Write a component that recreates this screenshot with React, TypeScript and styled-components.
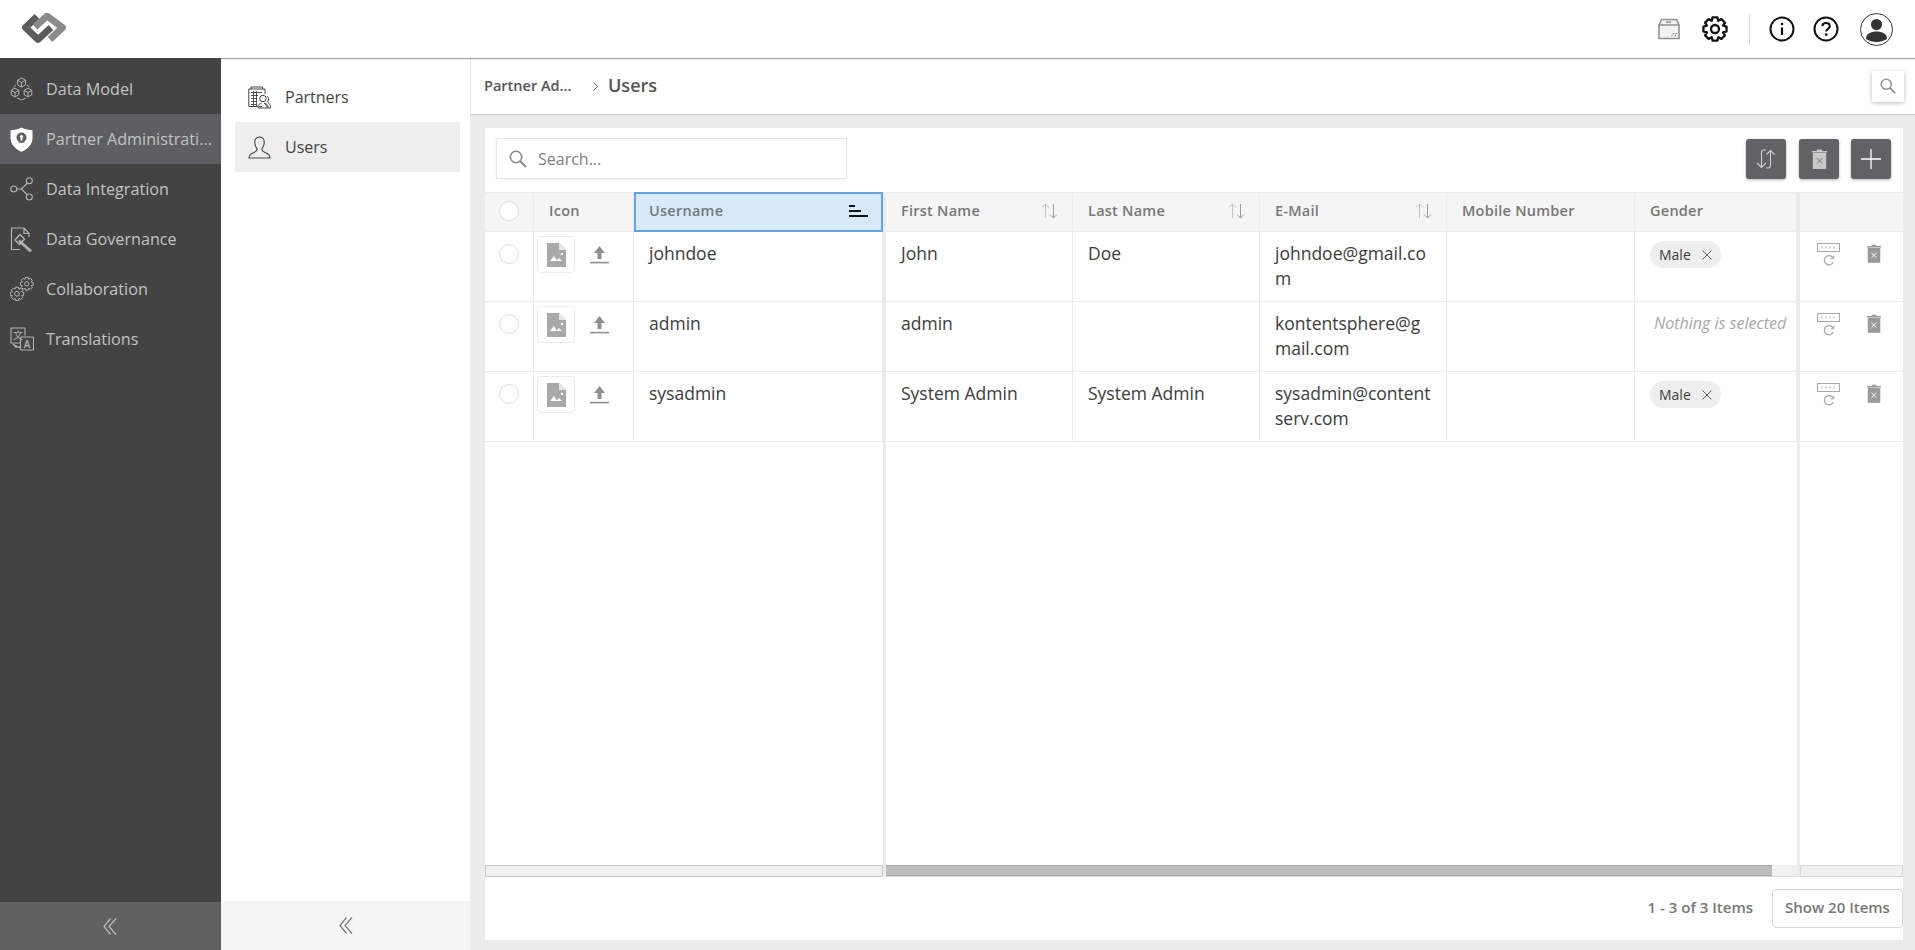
import React from 'react';
import styled, { createGlobalStyle } from 'styled-components';

const COLS = '49px 100px 249px 3px 187px 187px 187px 188px 162px 3px 103px';
const FONT = '"Open Sans", "Noto Sans", sans-serif';

const Global = createGlobalStyle`
  html, body { margin: 0; padding: 0; height: 100%; overflow: hidden; }
  body { font-family: ${FONT}; color: #333; background: #fff; }
  #root { height: 100%; }
  * { box-sizing: border-box; }
  svg { display: block; flex: none; }
`;

const Page = styled.div`
  display: flex;
  flex-direction: column;
  height: 950px;
  width: 1915px;
`;
const Header = styled.header`
  position: relative;
  z-index: 1;
  flex: none;
  height: 58px;
  display: flex;
  align-items: center;
  justify-content: space-between;
  padding: 0 22px 0 21px;
  background: #fff;
  box-shadow: 0 1px 1px rgba(0, 0, 0, 0.35);
`;
const HeaderTools = styled.div`
  display: flex;
  align-items: center;
`;
const ToolSlot = styled.div<{ $ml: number }>`
  margin-left: ${(p) => p.$ml}px;
  display: flex;
  align-items: center;
`;
const ToolDivider = styled.div`
  width: 1px;
  height: 30px;
  margin: 0 19px 0 21px;
  background: #d8d8d8;
`;
const Body = styled.div`
  flex: 1;
  min-height: 0;
  display: flex;
`;
const Nav = styled.nav`
  position: relative;
  z-index: 2;
  flex: none;
  width: 221px;
  background: #434343;
  display: flex;
  flex-direction: column;
`;
const NavList = styled.div`
  flex: 1;
  padding-top: 6px;
`;
const NavItem = styled.div<{ $active?: boolean }>`
  height: 50px;
  display: flex;
  align-items: center;
  gap: 13px;
  padding: 0 9px 0 10px;
  background: ${(p) => (p.$active ? '#5e5f63' : 'transparent')};
`;
const NavIconSlot = styled.span`
  flex: none;
  width: 23px;
  display: flex;
  justify-content: center;
`;
const NavLabel = styled.span`
  flex: 1;
  min-width: 0;
  font-size: 16.2px;
  color: #c2c2c2;
  white-space: nowrap;
`;
const Collapse = styled.div<{ $dark?: boolean }>`
  flex: none;
  height: ${(p) => (p.$dark ? 48 : 49)}px;
  display: flex;
  align-items: center;
  justify-content: center;
  padding-right: ${(p) => (p.$dark ? 2 : 0)}px;
  background: ${(p) => (p.$dark ? '#616161' : '#f5f5f5')};
`;
const SubNav = styled.aside`
  flex: none;
  width: 250px;
  background: #fff;
  border-right: 1px solid #ebebeb;
  display: flex;
  flex-direction: column;
`;
const SubList = styled.div`
  flex: 1;
  padding: 14px 10px 0 14px;
`;
const SubItem = styled.div<{ $active?: boolean }>`
  height: 50px;
  display: flex;
  align-items: center;
  gap: 14px;
  padding-left: 13px;
  font-size: 16px;
  color: #444;
  border-radius: 2px;
  background: ${(p) => (p.$active ? '#eeeeee' : 'transparent')};
`;
const Main = styled.main`
  flex: 1;
  min-width: 0;
  display: flex;
  flex-direction: column;
  background: #ececec;
`;
const Crumbs = styled.div`
  flex: none;
  height: 56px;
  display: flex;
  align-items: center;
  padding: 0 11px 0 13px;
  background: #fff;
  box-shadow: 0 1px 1px rgba(0, 0, 0, 0.12);
`;
const CrumbParent = styled.span`
  width: 90px;
  margin-bottom: 2px;
  font-size: 14.5px;
  font-weight: 600;
  color: #555;
  white-space: nowrap;
`;
const CrumbArrow = styled.span`
  margin: 0 10px 0 19px;
`;
const CrumbCurrent = styled.span`
  flex: 1;
  margin-bottom: 2px;
  font-size: 18px;
  font-weight: 600;
  color: #555;
`;
const CrumbSearch = styled.button`
  width: 32px;
  height: 31px;
  padding: 0;
  border: 0;
  border-radius: 2px;
  background: #fff;
  display: flex;
  align-items: center;
  justify-content: center;
  box-shadow: 0 1px 4px rgba(0, 0, 0, 0.28);
`;
const Panel = styled.section`
  flex: 1;
  min-height: 0;
  margin: 14px 12px 10px 14px;
  background: #fff;
  display: flex;
  flex-direction: column;
`;
const Toolbar = styled.div`
  flex: none;
  height: 64px;
  display: flex;
  justify-content: space-between;
  align-items: flex-start;
  padding: 10px 12px 0 11px;
`;
const SearchBox = styled.div`
  width: 351px;
  height: 41px;
  display: flex;
  align-items: center;
  gap: 11px;
  padding-left: 12px;
  border: 1px solid #e6e6e6;
  box-shadow: 0 0 1px rgba(0, 0, 0, 0.1);
  font-size: 16px;
  color: #808080;
`;
const ToolButtons = styled.div`
  display: flex;
  gap: 12px;
  padding-top: 1px;
`;
const ToolButton = styled.button<{ $mr?: number }>`
  width: 40px;
  height: 40px;
  padding: 0;
  margin-right: ${(p) => p.$mr ?? 0}px;
  border: 0;
  border-radius: 3px;
  background: #616266;
  display: flex;
  align-items: center;
  justify-content: center;
  box-shadow: 0 1px 3px rgba(0, 0, 0, 0.3);
`;
const Table = styled.div`
  flex: 1;
  min-height: 0;
  display: flex;
  flex-direction: column;
`;
const HeadRow = styled.div`
  flex: none;
  height: 40px;
  display: grid;
  grid-template-columns: ${COLS};
  background: #f5f5f5;
  border-top: 1px solid #ececec;
  border-bottom: 1px solid #ececec;
`;
const HeadCell = styled.div<{ $sorted?: boolean; $pad?: number }>`
  display: flex;
  align-items: center;
  justify-content: space-between;
  padding: 0 ${(p) => (p.$sorted ? 13 : 14)}px 3px ${(p) => p.$pad ?? 15}px;
  font-size: 14.5px;
  font-weight: 600;
  letter-spacing: 0.25px;
  color: #777;
  border-right: ${(p) => (p.$sorted ? '0' : '1px solid #ececec')};
  ${(p) =>
    p.$sorted
      ? `background: #d6eafc; border: 2px solid #62a4e0; margin-top: -1px; margin-bottom: -1px;`
      : ''}
`;
const CheckCell = styled.div<{ $head?: boolean }>`
  display: flex;
  align-items: ${(p) => (p.$head ? 'center' : 'flex-start')};
  justify-content: center;
  padding: ${(p) => (p.$head ? '0 0 2px' : '12px 0 0')};
  border-right: 1px solid #ececec;
`;
const Radio = styled.span`
  width: 20px;
  height: 20px;
  border-radius: 50%;
  background: #fff;
  border: 1px solid #dcdcdc;
`;
const Gap = styled.div`
  background: #ebebeb;
`;
const Row = styled.div`
  flex: none;
  height: 70px;
  display: grid;
  grid-template-columns: ${COLS};
  border-bottom: 1px solid #ececec;
`;
const FillRow = styled.div`
  flex: 1;
  min-height: 0;
  display: grid;
  grid-template-columns: ${COLS};
`;
const FillFrozen = styled.div`
  grid-column: span 3;
`;
const FillWide = styled.div`
  grid-column: span 5;
`;
const Cell = styled.div`
  padding: 9px 14px 0 15px;
  font-size: 17.5px;
  line-height: 25px;
  color: #3c3c3c;
  overflow-wrap: anywhere;
  word-break: break-all;
  border-right: 1px solid #ececec;
`;
const IconCell = styled.div`
  display: flex;
  align-items: flex-start;
  gap: 15px;
  padding: 4px 0 0 3px;
  border-right: 1px solid #ececec;
`;
const Thumb = styled.div`
  width: 38px;
  height: 37px;
  display: flex;
  align-items: center;
  justify-content: center;
  border: 1px solid #ececec;
  border-radius: 4px;
`;
const UploadSlot = styled.div`
  padding-top: 10px;
`;
const GenderCell = styled.div`
  padding: 9px 0 0 15px;
  border-right: 1px solid #ececec;
`;
const Chip = styled.span`
  display: flex;
  align-items: center;
  justify-content: space-between;
  width: 71px;
  height: 27px;
  padding: 0 9px 0 9px;
  border-radius: 14px;
  background: #eeeeee;
  font-size: 14px;
  color: #3c3c3c;
`;
const Nothing = styled.span`
  display: block;
  padding: 1px 0 0 4px;
  font-size: 16px;
  font-style: italic;
  color: #a8a8a8;
  white-space: nowrap;
`;
const ActionsCell = styled.div`
  display: flex;
  align-items: flex-start;
  gap: 27px;
  padding: 11px 0 0 17px;
`;
const ActionTrash = styled.span`
  padding-top: 1px;
`;
const ScrollRow = styled.div`
  flex: none;
  height: 12px;
  display: grid;
  grid-template-columns: ${COLS};
`;
const TrackFrozen = styled.div`
  grid-column: span 3;
  background: #f0f0f0;
  border: 1px solid #cacaca;
`;
const TrackWide = styled.div`
  grid-column: span 5;
  background: #f0f0f0;
  border-bottom: 1px solid #dcdcdc;
`;
const TrackEnd = styled.div`
  background: #f0f0f0;
  border: 1px solid #d8d8d8;
`;
const ScrollThumb = styled.div`
  height: 100%;
  background: #bdbdbd;
  border-top: 1px solid #a6a6a6;
  border-bottom: 1px solid #a6a6a6;
`;
const Footer = styled.div`
  flex: none;
  height: 63px;
  display: flex;
  align-items: center;
  justify-content: flex-end;
  gap: 19px;
  font-size: 15px;
  font-weight: 600;
  color: #777;
`;
const ItemCount = styled.span`
  padding-bottom: 3px;
`;
const PageSize = styled.button`
  width: 131px;
  height: 39px;
  padding: 0 0 3px;
  background: #fff;
  border: 1px solid #d6d6d6;
  border-radius: 4px;
  font: inherit;
  color: inherit;
`;

/* ---------- drawings ---------- */
const gearPath = (cx: number, cy: number, R: number, r: number, n: number) => {
  const pts: string[] = [];
  const step = (Math.PI * 2) / n;
  for (let i = 0; i < n; i++) {
    const a = i * step - Math.PI / 2;
    [
      [-0.5, r],
      [-0.27, R],
      [0.27, R],
      [0.5, r],
    ].forEach(([o, rad]) => {
      const t = a + o * step;
      pts.push(`${(cx + rad * Math.cos(t)).toFixed(2)} ${(cy + rad * Math.sin(t)).toFixed(2)}`);
    });
  }
  return `M${pts.join('L')}Z`;
};

const cubePath = (cx: number, cy: number, r: number) => {
  const w = r * 0.87;
  const h = r / 2;
  return `M${cx} ${cy - r}L${cx + w} ${cy - h}V${cy + h}L${cx} ${cy + r}L${cx - w} ${cy + h}V${cy - h}ZM${cx - w} ${cy - h}L${cx} ${cy}L${cx + w} ${cy - h}M${cx} ${cy}V${cy + r}`;
};

const Logo = () => (
  <svg width="46" height="32" viewBox="0 1 46 32">
    <path d="M16 4.5 L4.5 15.5 L17 27.5 L30 15.5" fill="none" stroke="#5c5c5c" strokeWidth="6.8" strokeLinejoin="round" />
    <path d="M14 15 L26 4 L41.5 15.5 L29 27.5" fill="none" stroke="#8a8a8a" strokeWidth="6.8" strokeLinejoin="round" />
  </svg>
);
const PackageIcon = () => (
  <svg width="22" height="22" viewBox="0 0 22 22" fill="none" stroke="#909090" strokeWidth="1.6">
    <path d="M1 7 L3.5 1.5 H18.5 L21 7 V20.5 H1 Z" fill="#f2f2f2" />
    <path d="M1 7 H21 M8 4 H13" />
    <path d="M13.5 17.5h1M17 17.5h1M15.5 15v.8M18 15v.8" strokeWidth="1.4" stroke="#707070" />
  </svg>
);
const GearIcon = () => (
  <svg width="26" height="26" viewBox="0 0 26 26" fill="none" stroke="#111" strokeWidth="2.3" strokeLinejoin="round">
    <path d={gearPath(13, 13, 11.8, 8.8, 8)} />
    <circle cx="13" cy="13" r="4" />
  </svg>
);
const InfoIcon = () => (
  <svg width="26" height="26" viewBox="0 0 26 26" fill="none" stroke="#111" strokeWidth="2">
    <circle cx="13" cy="13" r="11.5" />
    <circle cx="13" cy="8" r="1.3" fill="#111" stroke="none" />
    <path d="M13 11.5V19" strokeWidth="2.2" />
  </svg>
);
const HelpIcon = () => (
  <svg width="26" height="26" viewBox="0 0 26 26" fill="none" stroke="#111" strokeWidth="2">
    <circle cx="13" cy="13" r="11.5" />
    <path d="M9.3 10.2C9.5 8 11 7 13 7c2.2 0 3.8 1.3 3.8 3.2 0 2.6-3.6 2.7-3.6 5.2" strokeWidth="2.1" />
    <circle cx="13.2" cy="18.6" r="1.4" fill="#111" stroke="none" />
  </svg>
);
const AvatarIcon = () => (
  <svg width="33" height="33" viewBox="0 0 33 33">
    <circle cx="16.5" cy="16.5" r="16" fill="#fff" stroke="#333" strokeWidth="1" />
    <circle cx="16.5" cy="11.5" r="5.5" fill="#333" />
    <path d="M6 26 C6 20.5 11 18.5 16.5 18.5 S27 20.5 27 26 C24 28 20 29 16.5 29 S9 28 6 26Z" fill="#333" />
  </svg>
);
const NAV_STROKE = '#b4b4b4';
const CubesIcon = () => (
  <svg width="23" height="24" viewBox="0 0 23 24" fill="none" stroke={NAV_STROKE} strokeWidth="1" strokeLinejoin="round">
    <path d={cubePath(11.5, 5.5, 4.6)} />
    <path d={cubePath(5, 15.5, 4.4)} />
    <path d={cubePath(18, 15.5, 4.4)} />
    <path d="M6 8 L3.5 10 M17 8 L19.5 10 M7 21 L11.5 23 L16 21" />
  </svg>
);
const ShieldIcon = () => (
  <svg width="23" height="25" viewBox="0 0 23 25">
    <path d="M11.5 0.5 C15 2.5 19 3.2 22.5 3.2 V11 C22.5 17.5 17.5 22 11.5 24.8 C5.5 22 0.5 17.5 0.5 11 V3.2 C4 3.2 8 2.5 11.5 0.5Z" fill="#fff" />
    <circle cx="11.5" cy="10.5" r="5" fill="#5e5f63" />
    <circle cx="11.5" cy="9.5" r="1.6" fill="#fff" />
    <rect x="10.6" y="9.5" width="1.8" height="4" fill="#fff" />
    <rect x="8.5" y="14.5" width="6" height="1.2" fill="#5e5f63" />
  </svg>
);
const GraphIcon = () => (
  <svg width="23" height="24" viewBox="0 0 23 24" fill="none" stroke={NAV_STROKE} strokeWidth="1.1">
    <circle cx="3.8" cy="12" r="3" />
    <circle cx="19.3" cy="3.8" r="3" />
    <circle cx="19.3" cy="20" r="3" />
    <path d="M6.8 12 H11.5 L17.4 6 M11.5 12 L17.4 18" />
  </svg>
);
const GovernanceIcon = () => (
  <svg width="23" height="25" viewBox="0 0 23 25" fill="none" stroke={NAV_STROKE} strokeWidth="1.2">
    <path d="M14 1 H1.5 V22.5 H10 M14 1 L19 6.5 V10 M14 1 V6.5 H19" />
    <path d="M5 13 L10 7.5 L14.5 12 L9.5 17.5 Z M9.5 13 L21 23.5 L20 24.5 L8.5 14" strokeWidth="1.4" />
  </svg>
);
const GearsIcon = () => (
  <svg width="24" height="24" viewBox="0 0 24 24" fill="none" stroke={NAV_STROKE} strokeWidth="1" strokeLinejoin="round">
    <path d={gearPath(16.8, 6.8, 6.5, 4.8, 8)} />
    <circle cx="16.8" cy="6.8" r="2.2" />
    <path d={gearPath(7, 16.8, 6.8, 5, 8)} />
    <circle cx="7" cy="16.8" r="2.4" />
  </svg>
);
const TranslateIcon = () => (
  <svg width="24" height="24" viewBox="0 0 24 24" fill="none" stroke={NAV_STROKE} strokeWidth="1.1">
    <path d="M11 16 H1 V1 H15 V8.5" />
    <rect x="10.5" y="10" width="13" height="13" rx="1" />
    <text x="8" y="12" textAnchor="middle" fontSize="10" fill={NAV_STROKE} stroke="none" fontFamily='"Noto Sans CJK SC", sans-serif'>文</text>
    <text x="17" y="20.5" textAnchor="middle" fontSize="10" fontWeight="600" fill={NAV_STROKE} stroke="none" fontFamily={FONT}>A</text>
    <path d="M3 17 L6 20 H10 M6 20 L6 18" strokeWidth="1.4" />
  </svg>
);
const BuildingPeople = () => (
  <svg width="23" height="23" viewBox="0 0 23 23" fill="none" stroke="#444" strokeWidth="1">
    <path d="M14 20.5 H0.8 V3 H17 V8 M3 3 V1 H14.5 V3" />
    <path d="M3 6.5h11M3 9.5h7M3 12.5h6M3 15.5h6M3 18.5h6M5.5 5v15M8.5 5v15" strokeWidth="0.9" />
    <circle cx="15" cy="12.5" r="3.2" fill="#fff" />
    <path d="M10 22 C10 18 12 18 13.5 17 M16.5 17 C18 18 20 18 20 22 Z M10 22 H20" fill="#fff" />
    <path d="M19 10.5 C21 11 21 14 19.5 16 C20.5 17.5 22.6 17.5 22.6 22 H20" />
  </svg>
);
const UserIcon = () => (
  <svg width="23" height="23" viewBox="0 0 23 23" fill="none" stroke="#444" strokeWidth="1.1">
    <path d="M11.5 1 C15 1 16.5 3.7 16.2 7 C16 9.5 15 11.5 14 12.8 C13.6 14.8 15 15.6 17 16.4 C20 17.5 22 18.5 22 22 H1 C1 18.5 3 17.5 6 16.4 C8 15.6 9.4 14.8 9 12.8 C8 11.5 7 9.5 6.8 7 C6.5 3.7 8 1 11.5 1Z" />
  </svg>
);
const DoubleChevron = ({ color }: { color: string }) => (
  <svg width="14" height="17" viewBox="0 0 14 17" fill="none" stroke={color} strokeWidth="1.2">
    <path d="M7.5 0.5 L1 8.5 L7.5 16.5 M13 0.5 L6 8.5 L13 16.5" />
  </svg>
);
const MiniChevron = () => (
  <svg width="5" height="9" viewBox="0 0 5 9" fill="none" stroke="#777" strokeWidth="1">
    <path d="M0.5 0.5 L4.5 4.5 L0.5 8.5" />
  </svg>
);
const Magnifier = ({ size = 18 }: { size?: number }) => (
  <svg width={size} height={size} viewBox="0 0 18 18" fill="none" stroke="#8a8a8a" strokeWidth="1.6">
    <circle cx="7" cy="7" r="5.7" />
    <path d="M11.2 11.2 L17 17" strokeWidth="2" />
  </svg>
);
const SwapIcon = () => (
  <svg width="20" height="20" viewBox="0 0 20 20" fill="none" stroke="#cfcfcf" strokeWidth="1.1">
    <path d="M10 1 H8 C6.5 1 5.5 2 5.5 3.5 V18.5 M1 14 L5.5 18.5 L10 14" />
    <path d="M10 19 H12 C13.5 19 14.5 18 14.5 16.5 V1.5 M10.5 5.5 L14.5 1.5 L18.5 5.5" />
  </svg>
);
const TrashIcon = ({ color, cross, w = 15, h = 20 }: { color: string; cross: string; w?: number; h?: number }) => (
  <svg width={w} height={h} viewBox="0 0 15 20">
    <path d="M5 0.5 H10 V2 H15 V3.5 H0 V2 H5Z" fill={color} />
    <rect x="0.8" y="4" width="13.4" height="16" fill={color} />
    <path d="M4.8 9.2 L10.2 14.6 M10.2 9.2 L4.8 14.6" stroke={cross} strokeWidth="1" />
  </svg>
);
const PlusIcon = () => (
  <svg width="20" height="20" viewBox="0 0 20 20" stroke="#fff" strokeWidth="1.3">
    <path d="M10 0 V20 M0 10 H20" />
  </svg>
);
const SortAsc = () => (
  <svg width="19" height="12" viewBox="0 0 19 12" stroke="#111" strokeWidth="2">
    <path d="M0 1 H6 M0 6 H12 M0 11 H19" />
  </svg>
);
const SortNone = () => (
  <svg width="17" height="16" viewBox="0 0 17 16" fill="none" stroke="#9a9a9a" strokeWidth="1">
    <path d="M4.5 15 V1 M1 4.5 L4.5 1 L8 4.5" stroke="#c2c2c2" />
    <path d="M12.5 1 V15 M9 11.5 L12.5 15 L16 11.5" />
  </svg>
);
const FileImage = () => (
  <svg width="19" height="24" viewBox="0 0 19 24">
    <path d="M0 0 H12 L19 7 V24 H0 Z" fill="#a9a9a9" />
    <path d="M12 0 L19 7 H12 Z" fill="#e6e6e6" />
    <path d="M3 18 L7 13 L10 18 Z M9 18 L12 15 L15 18 Z" fill="#fff" />
    <circle cx="15" cy="11" r="1.2" fill="#fff" />
  </svg>
);
const UploadIcon = () => (
  <svg width="19" height="18" viewBox="0 0 19 18" fill="#8f8f8f">
    <path d="M9.5 0 L15 7 H11.5 V13 H7.5 V7 H4 Z" />
    <rect x="0" y="15.8" width="19" height="1.6" />
  </svg>
);
const CloseIcon = () => (
  <svg width="10" height="10" viewBox="0 0 10 10" stroke="#666" strokeWidth="1">
    <path d="M0.5 0.5 L9.5 9.5 M9.5 0.5 L0.5 9.5" />
  </svg>
);
const PasswordReset = () => (
  <svg width="23" height="23" viewBox="0 0 23 23" fill="none" stroke="#a8a8a8" strokeWidth="1">
    <rect x="0.5" y="0.5" width="22" height="8" />
    <path d="M4.5 4.5h1M8.5 4.5h1M12.5 4.5h1M16.5 4.5h1" strokeWidth="2" />
    <path d="M16 15 A4.6 4.6 0 1 0 16.2 19" strokeWidth="1.2" />
    <path d="M16.8 12.5 V15.8 H13.5" strokeWidth="1" />
  </svg>
);

const NAV = [
  { label: 'Data Model', icon: <CubesIcon /> },
  { label: 'Partner Administrati...', icon: <ShieldIcon />, active: true },
  { label: 'Data Integration', icon: <GraphIcon /> },
  { label: 'Data Governance', icon: <GovernanceIcon /> },
  { label: 'Collaboration', icon: <GearsIcon /> },
  { label: 'Translations', icon: <TranslateIcon /> },
];

const USERS = [
  { username: 'johndoe', first: 'John', last: 'Doe', email: 'johndoe@gmail.com', gender: 'Male' },
  { username: 'admin', first: 'admin', last: '', email: 'kontentsphere@gmail.com', gender: '' },
  { username: 'sysadmin', first: 'System Admin', last: 'System Admin', email: 'sysadmin@contentserv.com', gender: 'Male' },
];

export default function App() {
  return (
    <Page>
      <Global />
      <Header>
        <Logo />
        <HeaderTools>
          <PackageIcon />
          <ToolSlot $ml={22}><GearIcon /></ToolSlot>
          <ToolDivider />
          <InfoIcon />
          <ToolSlot $ml={18}><HelpIcon /></ToolSlot>
          <ToolSlot $ml={21}><AvatarIcon /></ToolSlot>
        </HeaderTools>
      </Header>
      <Body>
        <Nav>
          <NavList>
            {NAV.map((n) => (
              <NavItem key={n.label} $active={n.active}>
                <NavIconSlot>{n.icon}</NavIconSlot>
                <NavLabel>{n.label}</NavLabel>
              </NavItem>
            ))}
          </NavList>
          <Collapse $dark><DoubleChevron color="#bdbdbd" /></Collapse>
        </Nav>
        <SubNav>
          <SubList>
            <SubItem><BuildingPeople />Partners</SubItem>
            <SubItem $active><UserIcon />Users</SubItem>
          </SubList>
          <Collapse><DoubleChevron color="#777" /></Collapse>
        </SubNav>
        <Main>
          <Crumbs>
            <CrumbParent>Partner Ad...</CrumbParent>
            <CrumbArrow><MiniChevron /></CrumbArrow>
            <CrumbCurrent>Users</CrumbCurrent>
            <CrumbSearch><Magnifier size={16} /></CrumbSearch>
          </Crumbs>
          <Panel>
            <Toolbar>
              <SearchBox><Magnifier />Search...</SearchBox>
              <ToolButtons>
                <ToolButton $mr={1}><SwapIcon /></ToolButton>
                <ToolButton><TrashIcon color="#c9c9c9" cross="#777" /></ToolButton>
                <ToolButton><PlusIcon /></ToolButton>
              </ToolButtons>
            </Toolbar>
            <Table>
              <HeadRow>
                <CheckCell $head><Radio /></CheckCell>
                <HeadCell>Icon</HeadCell>
                <HeadCell $sorted $pad={13}>Username<SortAsc /></HeadCell>
                <Gap />
                <HeadCell>First Name<SortNone /></HeadCell>
                <HeadCell>Last Name<SortNone /></HeadCell>
                <HeadCell>E-Mail<SortNone /></HeadCell>
                <HeadCell>Mobile Number</HeadCell>
                <HeadCell>Gender</HeadCell>
                <Gap />
                <div />
              </HeadRow>
              {USERS.map((u) => (
                <Row key={u.username}>
                  <CheckCell><Radio /></CheckCell>
                  <IconCell>
                    <Thumb><FileImage /></Thumb>
                    <UploadSlot><UploadIcon /></UploadSlot>
                  </IconCell>
                  <Cell>{u.username}</Cell>
                  <Gap />
                  <Cell>{u.first}</Cell>
                  <Cell>{u.last}</Cell>
                  <Cell>{u.email}</Cell>
                  <Cell />
                  <GenderCell>
                    {u.gender ? (
                      <Chip>{u.gender}<CloseIcon /></Chip>
                    ) : (
                      <Nothing>Nothing is selected</Nothing>
                    )}
                  </GenderCell>
                  <Gap />
                  <ActionsCell>
                    <PasswordReset />
                    <ActionTrash><TrashIcon color="#9a9a9a" cross="#fff" w={14} h={19} /></ActionTrash>
                  </ActionsCell>
                </Row>
              ))}
              <FillRow>
                <FillFrozen />
                <Gap />
                <FillWide />
                <Gap />
                <div />
              </FillRow>
              <ScrollRow>
                <TrackFrozen />
                <Gap />
                <TrackWide><ScrollThumb style={{ width: `${(886 / 911) * 100}%` }} /></TrackWide>
                <Gap />
                <TrackEnd />
              </ScrollRow>
            </Table>
            <Footer>
              <ItemCount>1 - 3 of 3 Items</ItemCount>
              <PageSize>Show 20 Items</PageSize>
            </Footer>
          </Panel>
        </Main>
      </Body>
    </Page>
  );
}
